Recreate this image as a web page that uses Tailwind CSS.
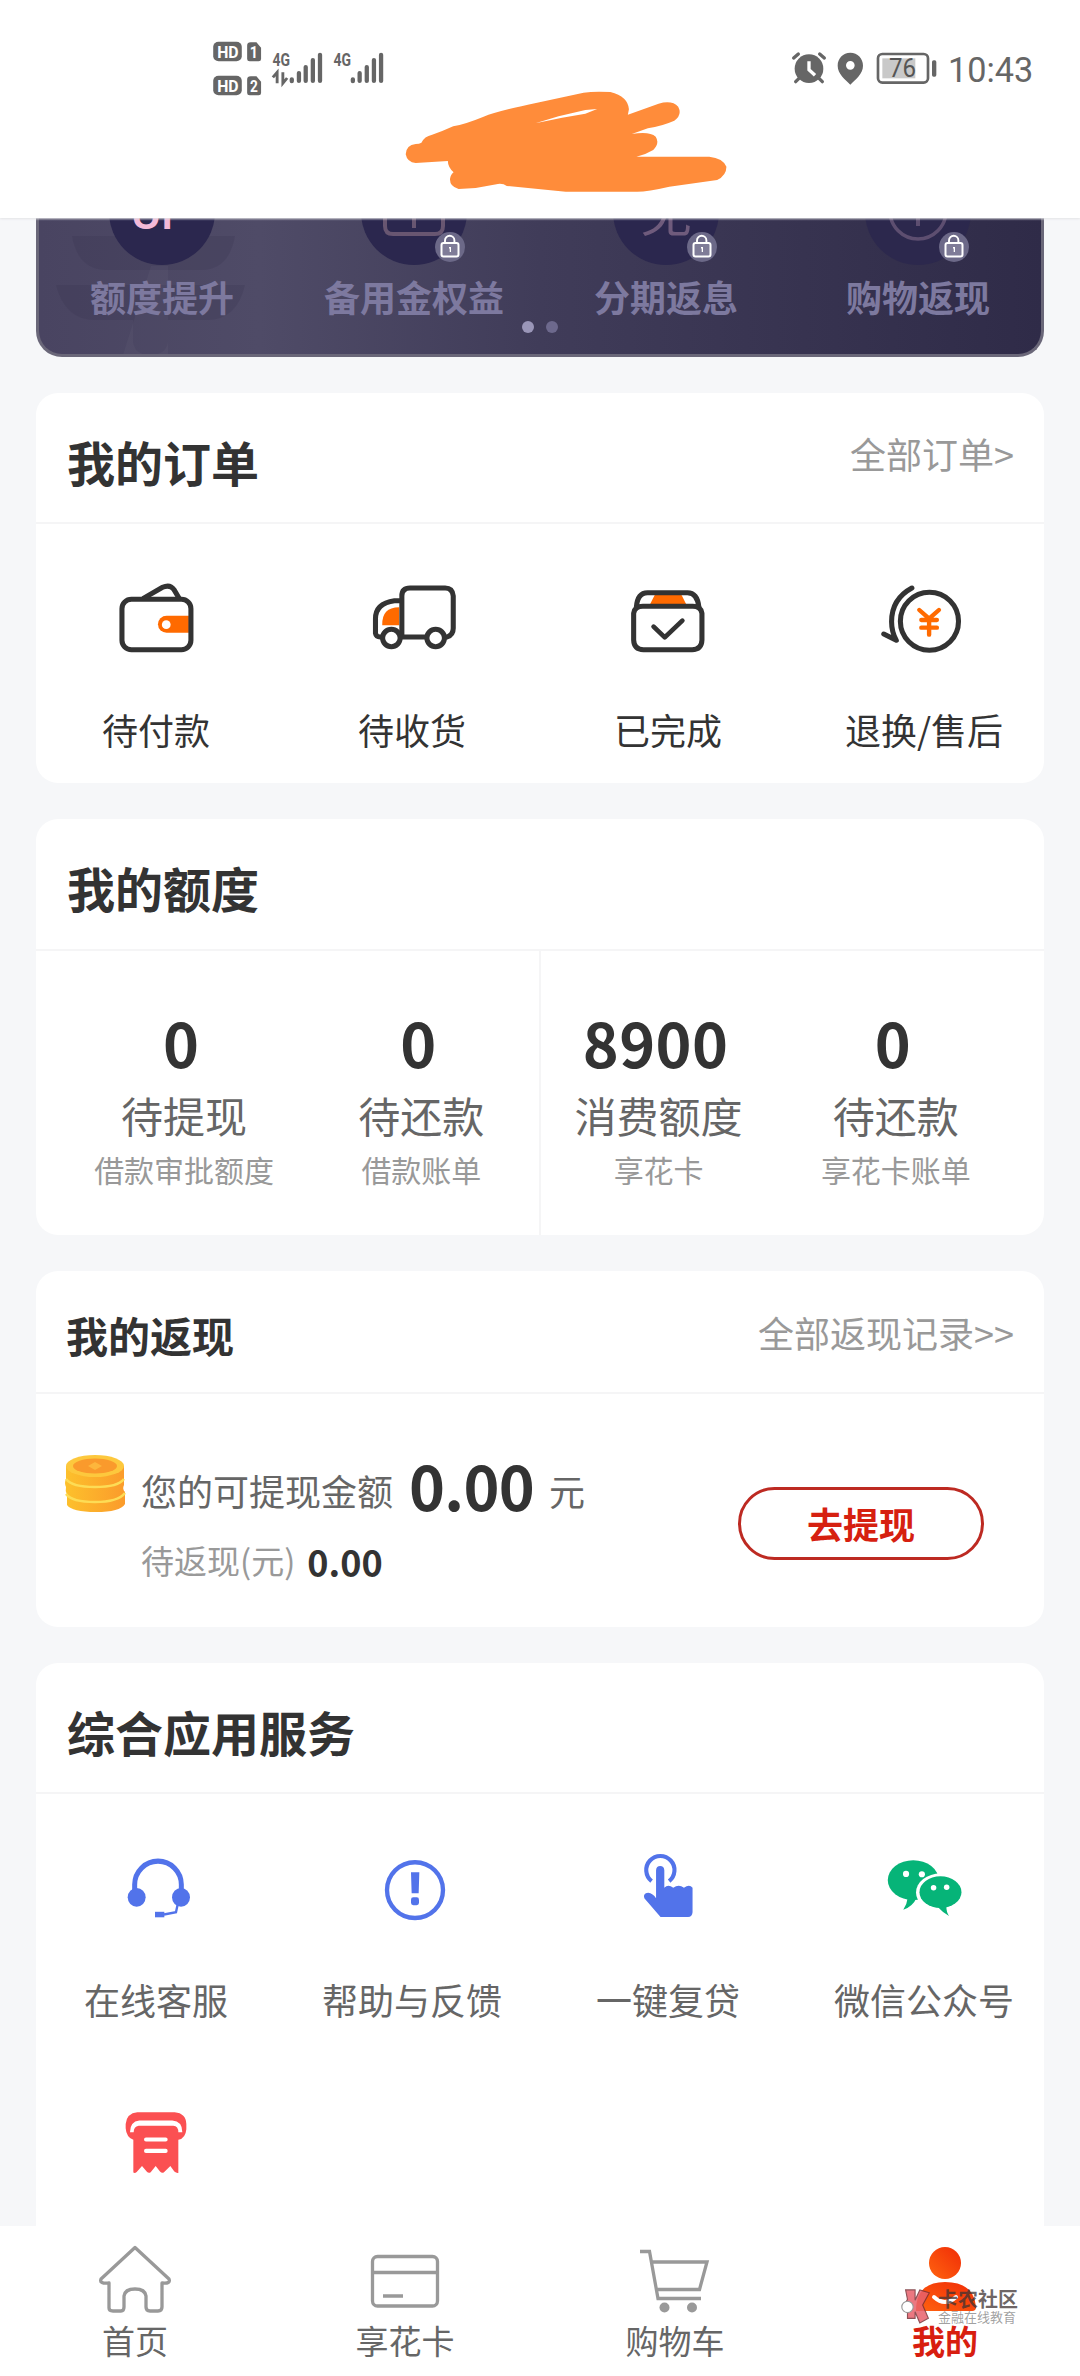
<!DOCTYPE html>
<html lang="zh-CN">
<head>
<meta charset="utf-8">
<title>我的</title>
<script src="https://cdn.jsdelivr.net/npm/@tailwindcss/browser@4"></script>
</head>
<body class="bg-[#f6f7f9]">
<svg class="hidden">
  <symbol id="lock" viewBox="0 0 32 32">
    <circle cx="16" cy="16" r="15" fill="#6c6988"/>
    <path d="M11 12V9.500a4.700 4.700 0 0 1 9.400 0V12" fill="none" stroke="#fff" stroke-width="1.900"/>
    <rect x="7.500" y="12" width="17" height="13.500" rx="2" fill="#7f7c98" stroke="#fff" stroke-width="2"/>
    <path d="M15 16h2v5h-1.300v-3.500H15z" fill="#fff"/>
  </symbol>
</svg>
<div class="relative flex h-[2376px] w-[1080px] flex-col overflow-hidden font-['Noto_Sans_CJK_SC',sans-serif] text-[#333]">

  <!-- status bar and header -->
  <header class="relative flex h-[218px] shrink-0 items-start justify-between bg-white shadow-[0_1px_2px_#e4e4e6] z-10">
    <svg class="mt-5 ml-[180px] h-[200px] w-[560px] shrink-0" viewBox="0 0 1568 600" preserveAspectRatio="none" font-family="Roboto, sans-serif">
      <g fill="#666">
        <rect x="93" y="65" width="80" height="59" rx="15"/>
        <rect x="93" y="167" width="80" height="59" rx="15"/>
        <path d="M198 67h16l13 16v34q0 7-7 7h-25q-7 0-7-7V77q0-10 10-10zM198 169h16l13 16v34q0 7-7 7h-25q-7 0-7-7v-40q0-10 10-10z"/>
      </g>
      <g fill="#fff" font-weight="700" font-size="50">
        <text x="104" y="113" textLength="60" lengthAdjust="spacingAndGlyphs">HD</text>
        <text x="104" y="215" textLength="60" lengthAdjust="spacingAndGlyphs">HD</text>
        <text x="195" y="113" font-size="47" textLength="23" lengthAdjust="spacingAndGlyphs">1</text>
        <text x="196" y="216" font-size="47" textLength="22" lengthAdjust="spacingAndGlyphs">2</text>
      </g>
      <g fill="#666" font-weight="700" font-size="55">
        <text x="259" y="138" textLength="49" lengthAdjust="spacingAndGlyphs">4G</text>
        <text x="430" y="138" textLength="49" lengthAdjust="spacingAndGlyphs">4G</text>
      </g>
      <path d="M260 172l12-15v33M288 157v33l12-16" fill="none" stroke="#666" stroke-width="8"/>
      <path d="M313 178v6M333 159v24M352 141v42M372 120v63M392 104v79M484 178v6M503 159v24M523 141v42M543 120v63M563 104v79" stroke="#666" stroke-width="12" stroke-linecap="round"/>
      <path fill="#ff8c3a" d="M660 372Q670 372 676 368Q684 349 706 344Q735 334 765 319Q800 312 850 290Q890 273 1000 248L1130 218Q1160 213 1205 216Q1255 230 1257 268L1254 284L1340 251Q1378 240 1395 260Q1407 285 1384 302Q1350 318 1310 325L1265 342Q1315 333 1332 350Q1344 370 1325 390Q1304 404 1278 410H1482Q1520 414 1530 440Q1530 466 1504 480L1370 500Q1310 515 1280 515H1080L915 498Q905 490 890 492L828 504L780 507Q755 500 756 477Q758 463 766 457Q750 441 750 423L660 429Q636 427 632 403Q633 375 660 372Z"/>
      <path fill="#fff" d="M995 310L1060 289L1135 270L1168 267L1135 281L1070 293Z"/>
    </svg>
    <svg class="mt-[30px] h-20 w-80 shrink-0" viewBox="0 0 960 240" font-family="Roboto, sans-serif">
      <circle cx="147" cy="116" r="43" fill="#666"/>
      <path d="M101 84l14-12M193 84l-14-12M107 155l10-10M187 155l-10-10" stroke="#666" stroke-width="10" stroke-linecap="round"/>
      <path d="M147 94v25l18 17" fill="none" stroke="#fff" stroke-width="10"/>
      <path fill="#666" fill-rule="evenodd" d="M271 68c22 0 38 17 38 39 0 25-23 42-38 57-15-15-38-32-38-57 0-22 16-39 38-39zm0 25a13 13 0 1 0 0 26 13 13 0 0 0 0-26z"/>
      <rect x="354" y="72" width="150" height="86" rx="13" fill="#fff" stroke="#666" stroke-width="8"/>
      <rect x="367" y="85" width="99" height="60" fill="#c9c9c9"/>
      <rect x="516" y="91" width="13" height="49" rx="5" fill="#666"/>
      <text x="387" y="142" font-size="76" fill="#555" textLength="81" lengthAdjust="spacingAndGlyphs">76</text>
      <text x="564" y="156" font-size="105" fill="#666" textLength="256" lengthAdjust="spacingAndGlyphs">10:43</text>
    </svg>
  </header>

  <main class="flex flex-col px-9">
    <!-- member benefits banner -->
    <section class="relative h-[139px] overflow-hidden rounded-b-[26px] border-x-3 border-b-3 border-[#6a6779] bg-[linear-gradient(90deg,#494461_0%,#4f4b67_22%,#403c59_50%,#2f2b48_100%)]">
      <svg class="absolute top-0 left-0 h-[137px] w-[260px]" viewBox="0 0 260 137">
        <path d="M33 18H196Q190 52 162 52H68Q39 52 33 18ZM17 67H206Q198 102 168 102H56Q26 102 17 67ZM94 102H129V124Q127 137 111 137Q96 137 94 124Z" fill="#35314e" opacity=".22"/>
        <path d="M84 137L112 48H129V137Z" fill="#fff" opacity=".03"/>
      </svg>
      <div class="relative -mx-[3px] grid grid-cols-4 text-center text-4xl font-bold leading-[54px] text-[#7d799f]">
        <div class="flex flex-col items-center">
          <svg class="h-[51px] w-[120px]" viewBox="0 0 120 51"><circle cx="60" cy="-6" r="53" fill="#2b274e"/><text x="29" y="11" font-family="Roboto, sans-serif" font-weight="500" font-size="46" fill="#f4b9d8">UP</text></svg>
          <span>额度提升</span>
        </div>
        <div class="flex flex-col items-center">
          <svg class="h-[51px] w-[120px]" viewBox="0 0 120 51"><circle cx="60" cy="-6" r="53" fill="#2b274e"/><path d="M31-20V8Q31 16 39 16H81Q89 16 89 8V-20M60-10V10" fill="none" stroke="#685671" stroke-width="4"/><use href="#lock" x="80" y="13" width="32" height="32"/></svg>
          <span>备用金权益</span>
        </div>
        <div class="flex flex-col items-center">
          <svg class="h-[51px] w-[120px]" viewBox="0 0 120 51"><circle cx="60" cy="-6" r="53" fill="#2b274e"/><text x="34" y="14" font-size="52" font-weight="400" fill="#6f5b7c">免</text><use href="#lock" x="80" y="13" width="32" height="32"/></svg>
          <span>分期返息</span>
        </div>
        <div class="flex flex-col items-center">
          <svg class="h-[51px] w-[120px]" viewBox="0 0 120 51"><circle cx="60" cy="-6" r="53" fill="#2b274e" opacity=".8"/><circle cx="60" cy="-7" r="28" fill="none" stroke="#5d4e70" stroke-width="3.500"/><path d="M60-10V8" stroke="#5d4e70" stroke-width="4"/><use href="#lock" x="80" y="13" width="32" height="32"/></svg>
          <span>购物返现</span>
        </div>
      </div>
      <div class="relative -mt-0.5 flex justify-center gap-3">
        <i class="size-3 rounded-full bg-[#9a96b8]"></i><i class="size-3 rounded-full bg-[#6d698d]"></i>
      </div>
    </section>

    <!-- orders -->
    <section class="mt-9 h-[390px] rounded-[22px] bg-white">
      <div class="flex h-[131px] items-start justify-between border-b-2 border-[#f5f5f6] px-[31px] pr-[30px] leading-[72px]">
        <h2 class="mt-8 text-5xl leading-[72px] font-bold">我的订单</h2>
        <a class="mt-6 text-4xl leading-[72px] text-[#999]">全部订单&gt;</a>
      </div>
      <div class="-mx-2 grid grid-cols-4 pt-[46px] text-4xl leading-[54px]">
        <div class="flex flex-col items-center gap-[42px]">
          <svg class="size-[90px]" viewBox="239.600 570 266.200 270" preserveAspectRatio="none" fill="none" stroke="#333" stroke-width="15">
            <path d="M334 656L392 622Q414 612 426 629L441 655"/>
            <path d="M470 707V758H404A25.500 25.500 0 0 1 404 707Z" fill="#ff6a00" stroke="none"/><circle cx="403" cy="734" r="13" fill="#fff" stroke="none"/>
            <rect x="272" y="658" width="204" height="151" rx="28"/>
          </svg>
          <span>待付款</span>
        </div>
        <div class="flex flex-col items-center gap-[42px]">
          <svg class="size-[90px]" viewBox="996.900 570 266.200 270" preserveAspectRatio="none" fill="none" stroke="#333" stroke-width="15">
            <path d="M1092 682V736H1042Q1040 682 1092 682Z" fill="#ff6a00" stroke="none"/>
            <path d="M1098 662H1078Q1022 670 1022 716V760Q1024 771 1036 771H1234Q1252 765 1252 745V648Q1250 624 1228 624H1124Q1100 624 1100 648V771"/>
            <circle cx="1069" cy="774" r="26" fill="#fff"/><circle cx="1200" cy="774" r="26" fill="#fff"/>
          </svg>
          <span>待收货</span>
        </div>
        <div class="flex flex-col items-center gap-[42px]">
          <svg class="size-[90px]" viewBox="245.500 570 266.200 270" preserveAspectRatio="none" fill="none" stroke="#333" stroke-width="15">
            <path d="M342 640H416L434 676H324Z" fill="#ff6a00" stroke="none"/>
            <path d="M285 682Q288 638 318 638H436Q466 638 470 682"/>
            <path d="M277 700Q280 679 304 679H452Q476 679 479 700V780Q478 809 450 809H306Q278 809 277 780Z"/>
            <path d="M336 740L369 772L421 722" stroke-linecap="round" stroke-linejoin="round" stroke-width="14"/>
          </svg>
          <span>已完成</span>
        </div>
        <div class="flex flex-col items-center gap-[42px]">
          <svg class="size-[90px]" viewBox="1002.800 570 266.200 270" preserveAspectRatio="none" fill="none" stroke="#333" stroke-width="15" stroke-linecap="round" stroke-linejoin="round">
            <ellipse cx="1152" cy="724" rx="86" ry="87"/>
            <path d="M1100 624Q1040 657 1040 725Q1040 755 1054 781L1017 762"/>
            <path d="M1122 690L1151 716L1180 690M1151 716V764M1128 720H1174M1128 743H1174" stroke="#ff6a00" stroke-width="13"/>
          </svg>
          <span>退换/售后</span>
        </div>
      </div>
    </section>

    <!-- credit limits -->
    <section class="mt-9 h-[416px] rounded-[22px] bg-white">
      <div class="h-[132px] border-b-2 border-[#f5f5f6] px-[31px] pt-8">
        <h2 class="text-5xl leading-[72px] font-bold">我的额度</h2>
      </div>
      <div class="relative grid h-[284px] grid-cols-4 px-[29.500px] pt-[55px] text-center">
        <i class="absolute top-0 bottom-0 left-[503px] w-[2px] bg-[#f5f5f6]"></i>
        <div class="flex flex-col"><b class="pr-1.5 text-[61px] leading-[72px] tracking-[0.5px]">0</b><span class="mt-[7px] text-[42px] leading-[60px] text-[#666]">待提现</span><span class="mt-0.5 text-3xl leading-[44px] text-[#999]">借款审批额度</span></div>
        <div class="flex flex-col"><b class="pr-1.5 text-[61px] leading-[72px] tracking-[0.5px]">0</b><span class="mt-[7px] text-[42px] leading-[60px] text-[#666]">待还款</span><span class="mt-0.5 text-3xl leading-[44px] text-[#999]">借款账单</span></div>
        <div class="flex flex-col"><b class="pr-1.5 text-[61px] leading-[72px] tracking-[0.5px]">8900</b><span class="mt-[7px] text-[42px] leading-[60px] text-[#666]">消费额度</span><span class="mt-0.5 text-3xl leading-[44px] text-[#999]">享花卡</span></div>
        <div class="flex flex-col"><b class="pr-1.5 text-[61px] leading-[72px] tracking-[0.5px]">0</b><span class="mt-[7px] text-[42px] leading-[60px] text-[#666]">待还款</span><span class="mt-0.5 text-3xl leading-[44px] text-[#999]">享花卡账单</span></div>
      </div>
    </section>

    <!-- cashback -->
    <section class="mt-9 h-[356px] rounded-[22px] bg-white">
      <div class="flex h-[123px] items-start justify-between border-b-2 border-[#f5f5f6] px-[30px]">
        <h2 class="mt-7 text-[42px] leading-[72px] font-bold">我的返现</h2>
        <a class="mt-[25px] text-4xl leading-[72px] text-[#999]">全部返现记录&gt;&gt;</a>
      </div>
      <div class="flex items-start pr-[60px] pl-[28px]">
        <svg class="mt-[59px] h-[62px] w-16" viewBox="0 0 64 62">
          <defs><linearGradient id="coin"><stop stop-color="#fdc12c"/><stop offset="1" stop-color="#fb9b2b"/></linearGradient></defs>
          <path d="M2 13V26Q0 30 2 34Q1 38 3 42V52Q8 59 32 59Q56 59 61 51V39Q58 36 60 32V13Z" fill="url(#coin)"/>
          <path d="M2 26Q8 34 31 34Q54 34 60 26M2 41Q8 49 31 49Q54 49 61 40" fill="none" stroke="#fddc55" stroke-width="2.500"/>
          <ellipse cx="31" cy="13" rx="29" ry="11" fill="#fdc83d"/>
          <ellipse cx="31" cy="13" rx="22" ry="7.500" fill="#fa9a2c"/>
          <path d="M31 9l7 4-7 4-7-4z" fill="#fdb63c"/>
        </svg>
        <div class="ml-[13px] flex grow flex-col pt-[61px]">
          <div class="flex items-start leading-[60px] text-[#666]"><span class="mt-[5px] text-4xl leading-[60px]">您的可提现金额</span><b class="ml-[16px] text-[61px] leading-[60px] tracking-[-0.7px] text-[#333]">0.00</b><span class="mt-[5px] ml-[15px] text-4xl leading-[60px]">元</span></div>
          <div class="mt-4 flex items-start"><span class="text-[33px] leading-[48px] text-[#999]">待返现(元)</span><b class="ml-3 text-4xl leading-[50px]">0.00</b></div>
        </div>
        <button class="mt-[93px] h-[73px] w-[246px] rounded-full border-3 border-[#bd2a22] pb-0.5 text-4xl font-bold leading-[60px] text-[#d62010]">去提现</button>
      </div>
    </section>

    <!-- services -->
    <section class="mt-9 h-[620px] rounded-t-[22px] bg-white">
      <div class="h-[131px] border-b-2 border-[#f5f5f6] px-[31px] pt-8">
        <h2 class="text-5xl leading-[72px] font-bold">综合应用服务</h2>
      </div>
      <div class="-mx-2 grid grid-cols-4 gap-y-[76px] pt-[51px] text-4xl leading-[54px] text-[#666]">
        <div class="flex flex-col items-center gap-[37px]">
          <svg class="size-[90px]" viewBox="243 537 270 261.400" preserveAspectRatio="none" fill="#5273ea">
            <path d="M314 668V652A70 68 0 0 1 454 652V668" fill="none" stroke="#5273ea" stroke-width="15"/>
            <circle cx="320" cy="689" r="27"/><circle cx="453" cy="689" r="27"/><path d="M375 731h28v16h-28z"/>
            <path d="M443 710L438 732L402 739" fill="none" stroke="#5273ea" stroke-width="7"/>
          </svg>
          <span>在线客服</span>
        </div>
        <div class="flex flex-col items-center gap-[37px]">
          <svg class="size-[90px]" viewBox="1011 537 270 261.400" preserveAspectRatio="none" fill="#5273ea">
            <ellipse cx="1155" cy="668" rx="84" ry="81" fill="none" stroke="#5273ea" stroke-width="13"/>
            <path d="M1143 616h25l-2 61h-21z"/><rect x="1143" y="689" width="24" height="23" rx="7"/>
          </svg>
          <span>帮助与反馈</span>
        </div>
        <div class="flex flex-col items-center gap-[37px]">
          <svg class="size-[90px]" viewBox="241 537 261.400 261.400" fill="#5273ea">
            <path d="M324 642A41 41 0 1 1 375 642" fill="none" stroke="#5273ea" stroke-width="12"/>
            <path d="M337 692V610Q338 598 349 598Q360 598 361 610V661Q372 649 387 661Q403 649 418 661Q434 649 443 661V732Q442 745 430 746H350L303 692Q298 678 314 676Q328 678 337 692Z"/>
          </svg>
          <span>一键复贷</span>
        </div>
        <div class="flex flex-col items-center gap-[37px]">
          <svg class="size-[90px]" viewBox="984.500 537 261.400 261.400" fill="#06b478">
            <ellipse cx="1084" cy="639" rx="74" ry="58"/><path d="M1068 690Q1066 708 1055 725Q1082 716 1094 690Z"/>
            <ellipse cx="1163" cy="675" rx="71" ry="55" fill="#fff"/>
            <ellipse cx="1163" cy="674" rx="61" ry="46"/><path d="M1156 718Q1170 734 1188 743Q1180 732 1180 714Z"/>
            <g fill="#fff"><circle cx="1063" cy="621" r="9"/><circle cx="1109" cy="622" r="9"/><circle cx="1143" cy="661" r="8"/><circle cx="1181" cy="660" r="8"/></g>
          </svg>
          <span>微信公众号</span>
        </div>
        <div class="flex flex-col items-center">
          <svg class="size-[90px]" viewBox="243 1284 270 261.400" preserveAspectRatio="none" fill="#fb5052">
            <path d="M322 1314H434Q468 1317 469 1348V1363Q467 1389 445 1394V1490Q439 1491 433 1486L421 1470L402 1488Q396 1492 390 1486L377 1470L362 1488Q356 1492 350 1486L336 1470L320 1487Q315 1492 310 1489V1394Q289 1386 287 1360V1348Q290 1317 322 1314Z"/>
            <path d="M328 1338H427Q457 1340 457 1372H445Q445 1354 430 1353H326Q311 1355 311 1372H300Q300 1341 328 1338Z" fill="#fff"/>
            <path d="M348 1393H407M348 1426H407" stroke="#fff" stroke-width="12" stroke-linecap="round"/>
          </svg>
        </div>
      </div>
    </section>
  </main>

  <!-- tab bar -->
  <nav class="absolute inset-x-0 bottom-0 grid h-[150px] grid-cols-4 bg-white pt-3.5 text-[33px] leading-10 text-[#666]">
    <div class="flex flex-col items-center">
      <svg class="h-20 w-[90px]" viewBox="0 0 90 80" fill="none" stroke="#999" stroke-width="3.300" stroke-linejoin="round">
        <path d="M45 7.500L11 39Q9 44 19 43V68Q19 71 23 71H31Q34 71 34 67V56Q35 49 45 49Q55 49 56 56V67Q56 71 60 71H68Q72 71 72 67V43Q81 44 79 39Z"/>
      </svg>
      <span>首页</span>
    </div>
    <div class="flex flex-col items-center">
      <svg class="h-20 w-[90px]" viewBox="0 0 90 80" fill="none" stroke="#999" stroke-width="3.300">
        <rect x="12.500" y="16.500" width="65" height="49.500" rx="5"/><path d="M12 32.500H78M23 56H43"/>
      </svg>
      <span>享花卡</span>
    </div>
    <div class="flex flex-col items-center">
      <svg class="h-20 w-[90px]" viewBox="0 0 90 80" fill="none" stroke="#999" stroke-width="3.300">
        <path d="M10 11.500H19.500L28 58.500H71M22 22H77L69.500 49.500H27"/><circle cx="34.500" cy="67.500" r="5" fill="#999" stroke="none"/><circle cx="62" cy="67.500" r="5" fill="#999" stroke="none"/>
      </svg>
      <span>购物车</span>
    </div>
    <div class="flex flex-col items-center font-bold text-[#d81e10]">
      <svg class="h-20 w-[90px]" viewBox="0 0 90 80">
        <defs><linearGradient id="me" x1="0" y1="1" x2="1" y2="0"><stop stop-color="#ff6410"/><stop offset="1" stop-color="#f02c06"/></linearGradient></defs>
        <circle cx="45" cy="23" r="16" fill="url(#me)"/>
        <path d="M16 71Q16 42 45 42Q74 42 76 67Q76 71 72 71Z" fill="url(#me)"/>
        <path d="M34 57Q45 67 56 57" fill="none" stroke="#fff" stroke-width="4" stroke-linecap="round"/>
      </svg>
      <span>我的</span>
    </div>
  </nav>

  <!-- community watermark -->
  <div class="absolute top-[2288px] left-[900px] z-10 flex gap-[5px]">
    <svg class="h-[36px] w-[33px]" viewBox="0 0 33 38" stroke="#7a3238" stroke-width="1.200">
      <path d="M5 2H15V13L20 2L30 5L23 18L29 32L20 37L15 25V32H7V24L3 20L7 12Z" fill="#e8616c" opacity=".85"/>
      <circle cx="7" cy="20" r="6" fill="#fff" stroke="#999"/>
    </svg>
    <div class="flex flex-col whitespace-nowrap"><span class="text-xl font-bold leading-[22px] text-[#3f3333]/75">卡农社区</span><span class="text-[13px] leading-[14px] text-[#777]/70">金融在线教育</span></div>
  </div>
</div>
</body>
</html>
